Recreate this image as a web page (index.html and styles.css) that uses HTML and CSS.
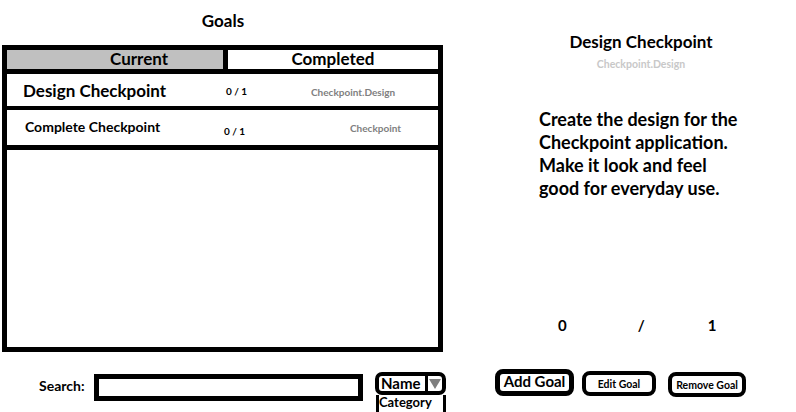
FILE: index.html
```html
<!DOCTYPE html>
<html>
<head>
    <meta name="viewport" content="width=device-width, initial-scale=1.0">
    <title>Checkpoint - Goals</title>
    <link rel="stylesheet" href="styles.css">
</head>
<body>
    <div class="top">
        <div class="goals">
            <div class="goals-title">Goals</div>
            <div class="goal-frame">
                <div class="tabs">
                    <div class="tab tab-current">Current</div>
                    <div class="tab tab-completed">Completed</div>
                </div>
                <div class="goal-row row-big">
                    <span class="goal-name">Design Checkpoint</span>
                    <span class="goal-count">0 / 1</span>
                    <span class="goal-cat">Checkpoint.Design</span>
                </div>
                <div class="goal-row row-small">
                    <span class="goal-name">Complete Checkpoint</span>
                    <span class="goal-count">0 / 1</span>
                    <span class="goal-cat">Checkpoint</span>
                </div>
                <div class="goal-empty"></div>
            </div>
        </div>

        <div class="detail">
            <div class="detail-title">Design Checkpoint</div>
            <div class="detail-cat">Checkpoint.Design</div>
            <p class="detail-text">Create the design for the Checkpoint application. Make it look and feel good for everyday use.</p>
            <div class="progress">
                <span class="done">0</span>
                <span class="slash">/</span>
                <span class="total">1</span>
            </div>
        </div>
    </div>

    <div class="bottom">
        <div class="search">
            <label class="search-label" for="search">Search:</label>
            <input class="search-input" id="search" type="text">
            <div class="sort">
                <div class="sort-box">
                    <span class="sort-value">Name</span>
                    <span class="sort-arrow"></span>
                </div>
                <div class="sort-list">Category</div>
            </div>
        </div>
        <div class="actions">
            <button type="button" class="btn btn-add">Add Goal</button>
            <button type="button" class="btn btn-edit">Edit Goal</button>
            <button type="button" class="btn btn-remove">Remove Goal</button>
        </div>
    </div>
</body>
</html>
```

FILE: styles.css
```css
body {
    margin: 0;
    width: 796px;
    height: 412px;
    overflow: hidden;
    background: #fff;
    color: #000;
    font-family: Lato, "Open Sans", sans-serif;
    font-weight: bold;
}

.top {
    display: flex;
    height: 352px;
}

/* colonne de gauche : liste des objectifs */
.goals {
    width: 446px;
}
.goals-title {
    height: 45px;
    box-sizing: border-box;
    padding-top: 11px;
    text-align: center;
    font-size: 17px;
    line-height: 20px;
}
.goal-frame {
    margin-left: 2px;
    width: 441px;
    height: 307px;
    box-sizing: border-box;
    border: 5px solid #000;
    background: #000;
    display: flex;
    flex-direction: column;
}
.tabs {
    display: flex;
    gap: 5px;
    height: 19px;
}
.tab {
    font-size: 17px;
    line-height: 18px;
}
.tab-current {
    width: 216px;
    background: #c0c0c0;
    padding-left: 103px;
    box-sizing: border-box;
}
.tab-completed {
    flex: 1;
    background: #fff;
    text-align: center;
}
.goal-row {
    background: #fff;
    display: flex;
    align-items: center;
}
.row-big {
    margin-top: 5px;
    height: 32px;
    padding-left: 16px;
}
.row-big .goal-name {
    width: 203px;
    font-size: 17px;
}
.row-big .goal-count {
    width: 85px;
    padding-top: 2px;
}
.row-big .goal-cat {
    padding-top: 3px;
}
.row-small {
    margin-top: 4px;
    height: 35px;
    padding-left: 18px;
    align-items: flex-start;
}
.row-small .goal-name {
    width: 199px;
    font-size: 14px;
    padding-top: 8px;
}
.row-small .goal-count {
    width: 126px;
    padding-top: 15px;
}
.row-small .goal-cat {
    padding-top: 12px;
}
.goal-count {
    font-size: 10px;
}
.goal-cat {
    font-size: 10px;
    color: #808080;
}
.goal-empty {
    margin-top: 5px;
    flex: 1;
    background: #fff;
}

/* colonne de droite : détail */
.detail {
    flex: 1;
    padding-left: 40px;
    display: flex;
    flex-direction: column;
}
.detail-title {
    margin-top: 32px;
    text-align: center;
    font-size: 17px;
    line-height: 20px;
}
.detail-cat {
    margin-top: 5px;
    text-align: center;
    font-size: 10.5px;
    line-height: 14px;
    color: #c8c8c8;
}
.detail-text {
    margin: 37px 0 0 53px;
    width: 205px;
    font-size: 18px;
    line-height: 23px;
}
.progress {
    margin-top: auto;
    margin-bottom: 18px;
    display: flex;
    font-size: 15px;
    line-height: 18px;
}
.done {
    margin-left: 72px;
}
.slash {
    margin-left: 71px;
}
.total {
    margin-left: 63px;
}

/* barre du bas */
.bottom {
    display: flex;
    height: 60px;
}
.search {
    width: 446px;
    display: flex;
    align-items: flex-start;
}
.search-label {
    margin: 26px 0 0 39px;
    width: 55px;
    font-size: 14px;
    line-height: 16px;
}
.search-input {
    margin-top: 22px;
    width: 269px;
    height: 27px;
    box-sizing: border-box;
    border: 5px solid #000;
    border-radius: 0;
    outline: none;
    padding: 0;
}
.sort {
    margin: 20px 0 0 12px;
    width: 71px;
    display: flex;
    flex-direction: column;
}
.sort-box {
    height: 23px;
    box-sizing: border-box;
    border: 4px solid #000;
    border-radius: 7px;
    display: flex;
    overflow: hidden;
}
.sort-value {
    flex: 1;
    font-size: 15px;
    line-height: 15px;
    padding-left: 2px;
}
.sort-arrow {
    width: 14px;
    border-left: 3px solid #000;
    position: relative;
}
.sort-arrow::after {
    content: "";
    position: absolute;
    left: 1px;
    top: 3px;
    border-left: 6px solid transparent;
    border-right: 6px solid transparent;
    border-top: 10px solid #7f7f7f;
}
.sort-list {
    margin-left: 1px;
    height: 17px;
    border-left: 3px solid #000;
    border-right: 3px solid #000;
    font-size: 13px;
    line-height: 14px;
    overflow: hidden;
}
.actions {
    display: flex;
    align-items: flex-start;
    padding-left: 49px;
}
.btn {
    font-family: inherit;
    font-weight: bold;
    background: #fff;
    color: #000;
    border: 4px solid #000;
    border-radius: 8px;
    padding: 0;
    cursor: pointer;
}
.btn-add {
    margin-top: 17px;
    width: 79px;
    height: 27px;
    border-width: 5px;
    padding-bottom: 4px;
    font-size: 15px;
    line-height: 14px;
}
.btn-edit {
    margin: 19px 0 0 8px;
    width: 74px;
    height: 25px;
    font-size: 10.5px;
}
.btn-remove {
    margin: 20px 0 0 12px;
    width: 78px;
    height: 25px;
    font-size: 10.5px;
}
```
